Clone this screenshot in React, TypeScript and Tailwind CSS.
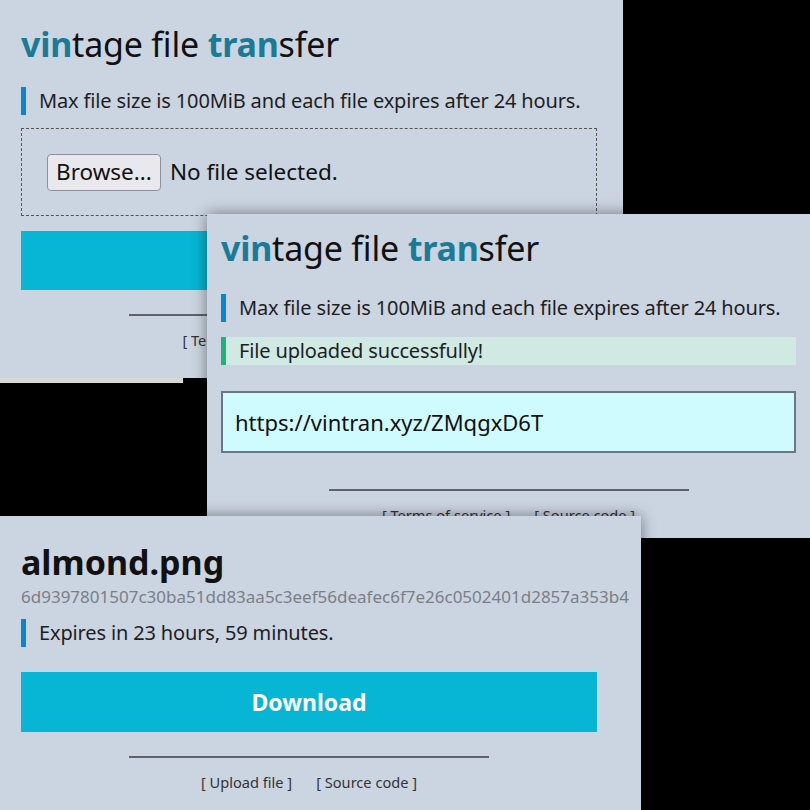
const font = { fontFamily: '"Noto Sans", "Open Sans", sans-serif' };

function Title() {
  return (
    <h1 className="text-[34px] leading-[44px] tracking-[-0.2px] text-[#111]">
      <span className="font-bold text-[#1a7b96]">vin</span>tage file{" "}
      <span className="font-bold text-[#1a7b96]">tran</span>sfer
    </h1>
  );
}

function Note({ children, tone = "info" }: { children: React.ReactNode; tone?: "info" | "ok" }) {
  const ok = tone === "ok";
  return (
    <div
      className={`flex items-center h-[28px] border-l-[5px] pl-[13px] text-[20px] tracking-[-0.15px] text-[#1e1e1e] ${
        ok ? "border-[#1fb37a] bg-[#d0e9e3]" : "border-[#0a86cc]"
      }`}
    >
      {children}
    </div>
  );
}

function Footer({ links }: { links: string[] }) {
  return (
    <div className="flex flex-col items-center">
      <div className="w-[360px] h-[2px] bg-[#5f6368]" />
      <div className="flex gap-[24px] mt-[14px] text-[14.6px] text-[#333]">
        {links.map((l) => (
          <span key={l}>[ {l} ]</span>
        ))}
      </div>
    </div>
  );
}

export default function App() {
  return (
    <div className="relative w-[810px] h-[810px] bg-black overflow-hidden" style={font}>
      {/* upload page */}
      <div className="absolute left-0 top-0 w-[623px] h-[378px] bg-[#cbd5e1] pl-[21px] pt-[22px]">
        <div className="w-[576px] flex flex-col">
          <Title />
          <div className="mt-[21px]">
            <Note>Max file size is 100MiB and each file expires after 24 hours.</Note>
          </div>
          <div className="mt-[13px] h-[88px] border border-dashed border-[#555] flex items-center pl-[25px] gap-[9px] text-[22.5px] text-[#111]">
            <span className="h-[37px] px-[8px] flex items-center bg-[#e9e9ed] border border-[#8f8f9d] rounded-[4px]">
              Browse...
            </span>
            <span>No file selected.</span>
          </div>
          <div className="mt-[15px] h-[59px] bg-[#06b6d4]" />
          <div className="mt-[24px]">
            <Footer links={["Terms of service", "Source code"]} />
          </div>
        </div>
      </div>
      <div className="absolute left-0 top-[378px] w-[183px] h-[5px] bg-[#d7d9d3]" />

      {/* uploaded page */}
      <div className="absolute left-[207px] top-[214px] w-[603px] h-[324px] bg-[#cbd5e1] pl-[14px] pt-[12px] shadow-[0_0_14px_rgba(0,0,0,0.45)]">
        <div className="w-[575px] flex flex-col">
          <Title />
          <div className="mt-[24px]">
            <Note>Max file size is 100MiB and each file expires after 24 hours.</Note>
          </div>
          <div className="mt-[15px]">
            <Note tone="ok">File uploaded successfully!</Note>
          </div>
          <div className="mt-[26px] h-[62px] border-2 border-[#6b7785] bg-[#cffafe] flex items-center pl-[12px] text-[22px] text-[#111]">
            https://vintran.xyz/ZMqgxD6T
          </div>
          <div className="mt-[36px]">
            <Footer links={["Terms of service", "Source code"]} />
          </div>
        </div>
      </div>

      {/* download page */}
      <div className="absolute left-0 top-[516px] w-[641px] h-[294px] bg-[#cbd5e1] pl-[21px] pt-[25px] shadow-[0_0_14px_rgba(0,0,0,0.45)]">
        <div className="w-[576px] flex flex-col">
          <div className="text-[34px] leading-[42px] font-bold text-[#111]">almond.png</div>
          <div className="mt-[3px] text-[17px] leading-[22px] text-[#7a7f86] whitespace-nowrap">
            6d9397801507c30ba51dd83aa5c3eef56deafec6f7e26c0502401d2857a353b4
          </div>
          <div className="mt-[11px]">
            <Note>Expires in 23 hours, 59 minutes.</Note>
          </div>
          <div className="mt-[25px] h-[60px] bg-[#06b6d4] flex items-center justify-center text-white text-[23px] font-bold">
            Download
          </div>
          <div className="mt-[24px]">
            <Footer links={["Upload file", "Source code"]} />
          </div>
        </div>
      </div>
    </div>
  );
}
